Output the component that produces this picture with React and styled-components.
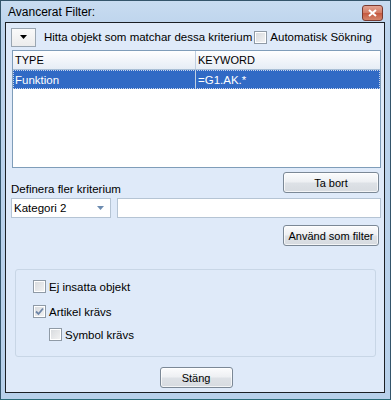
import styled, { createGlobalStyle } from "styled-components";

const Global = createGlobalStyle`
	html, body { margin: 0; padding: 0; background: #fff; }
	body { font-family: "Liberation Sans", Arial, sans-serif; font-size: 11.5px; color: #000; }
	* { box-sizing: border-box; }
`;

const Window = styled.div`
	width: 391px;
	height: 400px;
	display: flex;
	flex-direction: column;
	border: 1px solid #34556b;
	border-bottom-color: #2b6b78;
	background: linear-gradient(#c8dcf1, #bcd3ec 30px, #b7d0ea);
	padding: 0 5px 6px 4px;
`;

const TitleBar = styled.div`
	height: 21px;
	display: flex;
	align-items: center;
	justify-content: space-between;
	padding: 0 1px 0 3px;
	font-size: 12px;
	color: #000;
`;

const CloseBtn = styled.div`
	width: 21px;
	height: 16px;
	margin-top: 2px;
	margin-right: 1px;
	border: 1px solid #7a3a30;
	border-radius: 3px;
	background: linear-gradient(#e3a493, #d27a63 50%, #c4583f 51%, #d4846a);
	display: flex;
	align-items: center;
	justify-content: center;
`;

const Client = styled.div`
	flex: 1;
	border: 1px solid #1b1f24;
	background: #dfeaf9;
	display: flex;
	flex-direction: column;
	padding: 5px 3px 0 5px;
`;

const TopRow = styled.div`
	display: flex;
	align-items: center;
	height: 18px;
`;

const MenuBtn = styled.div`
	width: 25px;
	height: 19px;
	border: 1px solid #9aa6b2;
	background: linear-gradient(#fafafa, #ececec);
	display: flex;
	align-items: center;
	justify-content: center;
	margin-right: 8px;
`;

const Label = styled.span`
	white-space: nowrap;
`;

const Check = styled.span`
	width: 13px;
	height: 13px;
	flex: none;
	border: 1px solid #8f9aa6;
	background: linear-gradient(135deg, #d6d9dd, #f4f4f4);
	box-shadow: inset 0 0 0 1px #fff;
	display: inline-flex;
	align-items: center;
	justify-content: center;
	margin-left: ${({ ml }) => ml || "0"};
	margin-right: 3px;
`;

const Grid = styled.div`
	margin: 4px 0 0 1px;
	width: 369px;
	height: 118px;
	border: 1px solid #7f9db9;
	background: #fff;
	display: flex;
	flex-direction: column;
`;

const Row = styled.div`
	display: grid;
	grid-template-columns: 183px 1fr;
	height: 19px;
	background: ${({ head, sel }) =>
		head ? "linear-gradient(#ffffff, #f3f6fa 45%, #e6edf5)" : sel ? "#316ac5" : "transparent"};
	color: ${({ sel }) => (sel ? "#fff" : "#000")};
	border-bottom: ${({ head }) => (head ? "1px solid #a9bfd6" : "none")};
	outline: ${({ sel }) => (sel ? "1px dotted #c8d4ea" : "none")};
	outline-offset: -1px;
`;

const Cell = styled.div`
	display: flex;
	align-items: center;
	padding-left: 2px;
	font-size: ${({ head }) => (head ? "11px" : "11.5px")};
	border-right: ${({ last }) => (last ? "none" : "1px solid #c0cfe0")};
`;

const BtnRow = styled.div`
	display: flex;
	justify-content: ${({ center }) => (center ? "center" : "flex-end")};
	margin-top: ${({ mt }) => mt || "0"};
	padding-right: ${({ pr }) => pr || "0"};
`;

const Button = styled.div`
	width: ${({ w }) => w};
	height: 21px;
	border: 1px solid #7b8896;
	border-radius: 3px;
	background: linear-gradient(#fbfcfd, #eef0f3 45%, #dde1e6 55%, #d7dbe0);
	box-shadow: inset 0 0 0 1px rgba(255, 255, 255, 0.7);
	display: flex;
	align-items: center;
	justify-content: center;
	font-size: 11px;
`;

const SectionLabel = styled.div`
	margin-top: -11px;
	height: 14px;
	line-height: 14px;
`;

const InputRow = styled.div`
	display: flex;
	gap: 6px;
	margin-top: 2px;
`;

const Combo = styled.div`
	width: 100px;
	height: 20px;
	border: 1px solid #b5c4d4;
	background: #fff;
	display: flex;
	align-items: center;
	justify-content: space-between;
	padding: 0 6px 0 2px;
`;

const TextBox = styled.div`
	width: 264px;
	height: 20px;
	border: 1px solid #b5c4d4;
	background: #fff;
`;

const Group = styled.div`
	margin: 23px 0 0 4px;
	width: 361px;
	height: 88px;
	border: 1px solid #c8d6e6;
	border-radius: 3px;
	display: flex;
	flex-direction: column;
	padding: 10px 0 0 17px;
`;

const CheckLine = styled.div`
	display: flex;
	align-items: center;
	height: 13px;
	margin-top: ${({ mt }) => mt || "0"};
	padding-left: ${({ indent }) => indent || "0"};
`;

const Checkbox = ({ checked }) => (
	<Check>
		{checked && (
			<svg width="9" height="9" viewBox="0 0 9 9">
				<path d="M1 4.5 L3.5 7 L8 1.5" fill="none" stroke="#6e86a8" strokeWidth="1.8" />
			</svg>
		)}
	</Check>
);

const Arrow = ({ color = "#000", w = 7 }) => (
	<svg width={w} height="4" viewBox="0 0 7 4">
		<path d="M0 0 H7 L3.5 4 Z" fill={color} />
	</svg>
);

export default function App() {
	return (
		<>
			<Global />
			<Window>
				<TitleBar>
					<span>Avancerat Filter:</span>
					<CloseBtn>
						<svg width="9" height="8" viewBox="0 0 9 8">
							<path d="M1 1 L8 7 M8 1 L1 7" stroke="#fff" strokeWidth="2" />
						</svg>
					</CloseBtn>
				</TitleBar>
				<Client>
					<TopRow>
						<MenuBtn>
							<Arrow />
						</MenuBtn>
						<Label>Hitta objekt som matchar dessa kriterium</Label>
						<Check ml="2px" />
						<Label>Automatisk Sökning</Label>
					</TopRow>
					<Grid>
						<Row head>
							<Cell head>TYPE</Cell>
							<Cell head last>KEYWORD</Cell>
						</Row>
						<Row sel>
							<Cell>Funktion</Cell>
							<Cell last>=G1.AK.*</Cell>
						</Row>
					</Grid>
					<BtnRow mt="4px" pr="2px">
						<Button w="96px">Ta bort</Button>
					</BtnRow>
					<SectionLabel>Definera fler kriterium</SectionLabel>
					<InputRow>
						<Combo>
							<span>Kategori 2</span>
							<Arrow color="#6c8bb0" />
						</Combo>
						<TextBox />
					</InputRow>
					<BtnRow mt="7px" pr="2px">
						<Button w="96px">Använd som filter</Button>
					</BtnRow>
					<Group>
						<CheckLine>
							<Checkbox />
							<Label>Ej insatta objekt</Label>
						</CheckLine>
						<CheckLine mt="12px">
							<Checkbox checked />
							<Label>Artikel krävs</Label>
						</CheckLine>
						<CheckLine mt="10px" indent="16px">
							<Checkbox />
							<Label>Symbol krävs</Label>
						</CheckLine>
					</Group>
					<BtnRow center mt="10px">
						<Button w="73px">Stäng</Button>
					</BtnRow>
				</Client>
			</Window>
		</>
	);
}
